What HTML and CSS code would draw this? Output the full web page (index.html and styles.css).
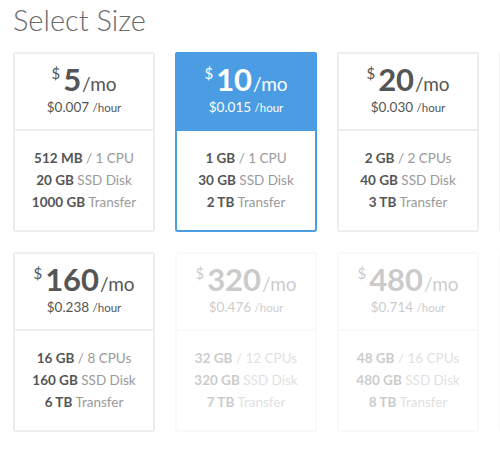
FILE: index.html
```html
<!DOCTYPE html>
<html>
<head>
<meta charset="utf-8">
<link rel="stylesheet" href="styles.css">
</head>
<body>
<div class="page">
  <h1 class="title">Select Size</h1>
  <div class="plans">
    <div class="plan">
      <div class="plan-head">
        <div class="price"><span class="cur">$</span><span class="amt">5</span><span class="per">/mo</span></div>
        <div class="hourly">$0.007 <span class="unit">/hour</span></div>
      </div>
      <div class="plan-body">
        <div><b>512 MB</b> / 1 CPU</div>
        <div><b>20 GB</b> SSD Disk</div>
        <div><b>1000 GB</b> Transfer</div>
      </div>
    </div>
    <div class="plan selected">
      <div class="plan-head">
        <div class="price"><span class="cur">$</span><span class="amt">10</span><span class="per">/mo</span></div>
        <div class="hourly">$0.015 <span class="unit">/hour</span></div>
      </div>
      <div class="plan-body">
        <div><b>1 GB</b> / 1 CPU</div>
        <div><b>30 GB</b> SSD Disk</div>
        <div><b>2 TB</b> Transfer</div>
      </div>
    </div>
    <div class="plan">
      <div class="plan-head">
        <div class="price"><span class="cur">$</span><span class="amt">20</span><span class="per">/mo</span></div>
        <div class="hourly">$0.030 <span class="unit">/hour</span></div>
      </div>
      <div class="plan-body">
        <div><b>2 GB</b> / 2 CPUs</div>
        <div><b>40 GB</b> SSD Disk</div>
        <div><b>3 TB</b> Transfer</div>
      </div>
    </div>
    <div class="plan">
      <div class="plan-head"></div>
      <div class="plan-body"></div>
    </div>
    <div class="plan">
      <div class="plan-head">
        <div class="price"><span class="cur">$</span><span class="amt">160</span><span class="per">/mo</span></div>
        <div class="hourly">$0.238 <span class="unit">/hour</span></div>
      </div>
      <div class="plan-body">
        <div><b>16 GB</b> / 8 CPUs</div>
        <div><b>160 GB</b> SSD Disk</div>
        <div><b>6 TB</b> Transfer</div>
      </div>
    </div>
    <div class="plan disabled">
      <div class="plan-head">
        <div class="price"><span class="cur">$</span><span class="amt">320</span><span class="per">/mo</span></div>
        <div class="hourly">$0.476 <span class="unit">/hour</span></div>
      </div>
      <div class="plan-body">
        <div><b>32 GB</b> / 12 CPUs</div>
        <div><b>320 GB</b> SSD Disk</div>
        <div><b>7 TB</b> Transfer</div>
      </div>
    </div>
    <div class="plan disabled">
      <div class="plan-head">
        <div class="price"><span class="cur">$</span><span class="amt">480</span><span class="per">/mo</span></div>
        <div class="hourly">$0.714 <span class="unit">/hour</span></div>
      </div>
      <div class="plan-body">
        <div><b>48 GB</b> / 16 CPUs</div>
        <div><b>480 GB</b> SSD Disk</div>
        <div><b>8 TB</b> Transfer</div>
      </div>
    </div>
    <div class="plan disabled">
      <div class="plan-head"></div>
      <div class="plan-body"></div>
    </div>
  </div>
</div>
</body>
</html>
```

FILE: styles.css
```css
html, body {
  margin: 0;
  padding: 0;
  background: #fff;
}
body {
  font-family: Lato, "Liberation Sans", sans-serif;
  color: #555;
}
.page {
  width: 500px;
  height: 460px;
  overflow: hidden;
}
.title {
  margin: 3px 0 15px 13px;
  font-size: 29px;
  line-height: 34px;
  font-weight: 300;
  color: #6a6a6a;
}
.plans {
  display: grid;
  grid-template-columns: repeat(4, 142px);
  column-gap: 20px;
  row-gap: 20px;
  padding-left: 13px;
  width: 700px;
}
.plan {
  box-sizing: border-box;
  height: 180px;
  border: 2px solid #eeeeee;
  border-radius: 3px;
  display: flex;
  flex-direction: column;
  text-align: center;
}
.plan-head {
  box-sizing: border-box;
  height: 77px;
  padding-top: 10px;
  border-bottom: 2px solid #eeeeee;
}
.price {
  line-height: 34px;
  height: 34px;
  color: #555;
  white-space: nowrap;
}
.cur {
  font-size: 15px;
  line-height: 1;
  vertical-align: 12px;
  margin-right: 3px;
}
.amt {
  font-size: 31px;
  line-height: 1;
  font-weight: 700;
}
.per {
  font-size: 19px;
  line-height: 1;
  font-weight: 400;
  margin-left: 1px;
}
.hourly {
  font-size: 13.5px;
  line-height: 18px;
}
.unit {
  font-size: 11.5px;
}
.plan-body {
  flex: 1;
  display: flex;
  flex-direction: column;
  justify-content: center;
  font-size: 13.5px;
  line-height: 22px;
  color: #9a9a9a;
  padding-bottom: 2px;
}
.plan-body b {
  color: #555;
  font-weight: 700;
}
.plan.selected {
  border-color: #4a9de2;
}
.plan.selected .plan-head {
  background: #4a9de2;
  border-bottom-color: #4a9de2;
  margin: -2px -2px 0;
  height: 79px;
  padding-top: 12px;
  border-radius: 3px 3px 0 0;
}
.plan.selected .price,
.plan.selected .hourly {
  color: #fff;
}
.plan.disabled {
  opacity: 0.3;
}
```
